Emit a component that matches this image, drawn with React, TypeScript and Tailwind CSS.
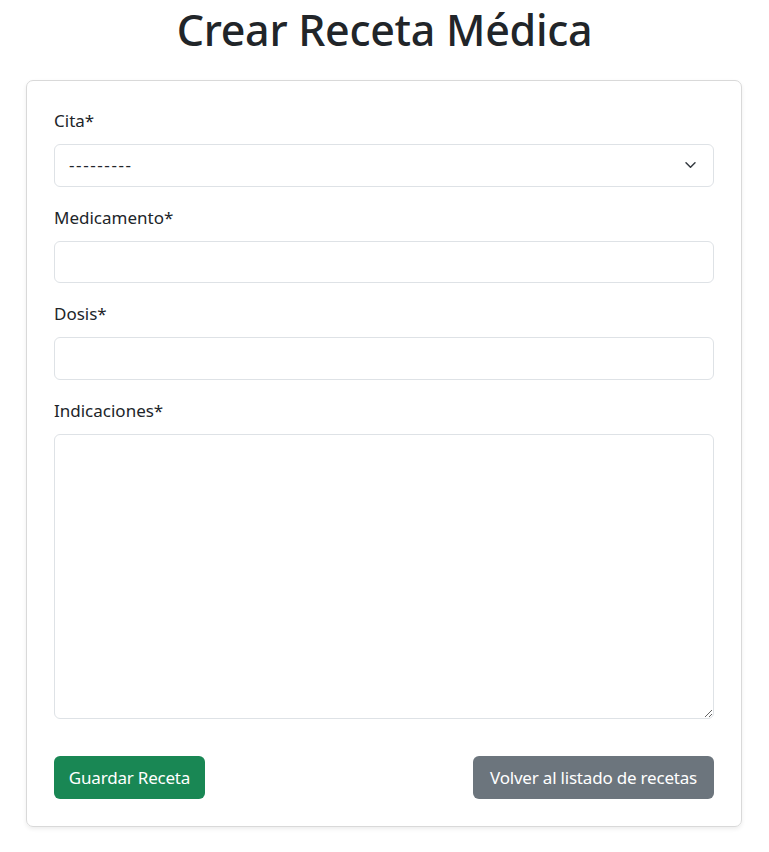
import React from "react";

const FONT = "font-['Noto_Sans',_'Open_Sans',_sans-serif]";

function Label({ children }: { children: React.ReactNode }) {
  return <label className="block mb-[10px] text-[17px] leading-[26px] text-[#212529]">{children}</label>;
}

export default function App() {
  return (
    <div className={`${FONT} bg-white min-h-[852px] w-[769px] text-[#212529]`}>
      <h1 className="text-center text-[43px] leading-[58px] font-medium pt-[1px] text-[#212529] tracking-[-0.3px]">
        Crear Receta Médica
      </h1>

      <div className="ml-[26px] mr-[27px] mt-[21px] border border-[#d9d9d9] rounded-[7px] shadow-[0_2px_4px_rgba(0,0,0,0.075)] px-[27px] pt-[27px] pb-[27px]">
        <div className="mb-[18px]">
          <Label>Cita*</Label>
          <div className="relative">
            <select className="appearance-none w-full h-[43px] border border-[#dee2e6] rounded-[6px] pl-[14px] pr-[40px] pb-[2px] text-[17px] tracking-[1.6px] text-[#212529] bg-white outline-none">
              <option>---------</option>
            </select>
            <svg
              className="pointer-events-none absolute right-[16px] top-[15px]"
              width="15"
              height="12"
              viewBox="0 0 16 16"
              fill="none"
              stroke="#343a40"
              strokeWidth="2"
              strokeLinecap="round"
              strokeLinejoin="round"
            >
              <path d="m2 5 6 6 6-6" />
            </svg>
          </div>
        </div>

        <div className="mb-[18px]">
          <Label>Medicamento*</Label>
          <input className="block w-full h-[42px] border border-[#dee2e6] rounded-[6px] px-[14px] text-[17px] outline-none" />
        </div>

        <div className="mb-[18px]">
          <Label>Dosis*</Label>
          <input className="block w-full h-[43px] border border-[#dee2e6] rounded-[6px] px-[14px] text-[17px] outline-none" />
        </div>

        <div>
          <Label>Indicaciones*</Label>
          <textarea className="block w-full h-[285px] border border-[#dee2e6] rounded-[6px] px-[14px] py-[7px] text-[17px] outline-none" />
        </div>

        <div className="flex justify-between items-center mt-[37px]">
          <button className="h-[43px] rounded-[6px] bg-[#198754] text-white text-[17px] w-[151px] whitespace-nowrap tracking-[-0.2px]">
            Guardar Receta
          </button>
          <button className="h-[43px] rounded-[6px] bg-[#6c757d] text-white text-[17px] w-[241px] whitespace-nowrap tracking-[-0.2px]">
            Volver al listado de recetas
          </button>
        </div>
      </div>
    </div>
  );
}
